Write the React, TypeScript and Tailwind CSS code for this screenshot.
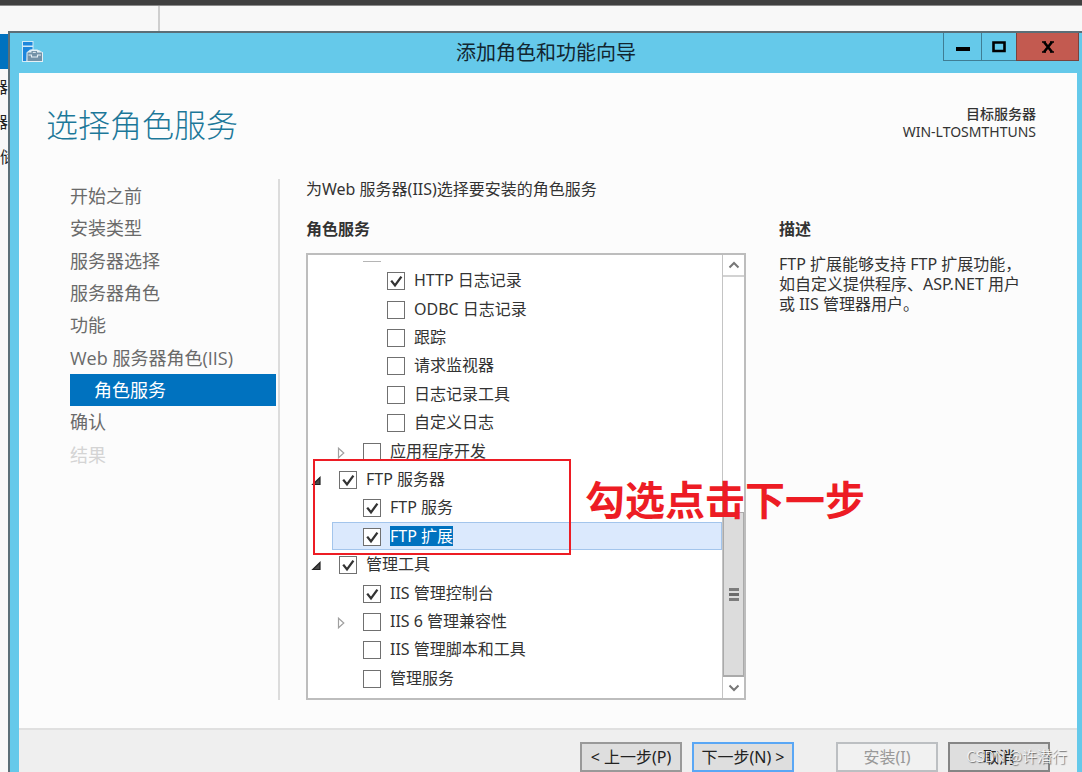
import React from "react";

type Item = {
  label: string;
  level: 0 | 1 | 2;
  checked?: boolean;
  expander?: "open" | "closed";
  selected?: boolean;
};

const items: Item[] = [
  { label: "HTTP 日志记录", level: 2, checked: true },
  { label: "ODBC 日志记录", level: 2 },
  { label: "跟踪", level: 2 },
  { label: "请求监视器", level: 2 },
  { label: "日志记录工具", level: 2 },
  { label: "自定义日志", level: 2 },
  { label: "应用程序开发", level: 1, expander: "closed" },
  { label: "FTP 服务器", level: 0, checked: true, expander: "open" },
  { label: "FTP 服务", level: 1, checked: true },
  { label: "FTP 扩展", level: 1, checked: true, selected: true },
  { label: "管理工具", level: 0, checked: true, expander: "open" },
  { label: "IIS 管理控制台", level: 1, checked: true },
  { label: "IIS 6 管理兼容性", level: 1, expander: "closed" },
  { label: "IIS 管理脚本和工具", level: 1 },
  { label: "管理服务", level: 1 },
];

const indent = ["ml-0", "ml-6", "ml-12"];

const steps = [
  { label: "开始之前" },
  { label: "安装类型" },
  { label: "服务器选择" },
  { label: "服务器角色" },
  { label: "功能" },
  { label: "Web 服务器角色(IIS)" },
  { label: "角色服务", state: "current" },
  { label: "确认" },
  { label: "结果", state: "disabled" },
];

function Expander({ kind }: { kind?: "open" | "closed" }) {
  return (
    <span className="flex w-[30px] shrink-0 items-center pt-1">
      {kind === "open" && (
        <button type="button" aria-label="折叠" className="ml-[2px]">
          <svg width="11" height="10" viewBox="0 0 11 10" className="block">
            <path d="M9 1.5V8.5H1.8Z" fill="#4a4a4a" stroke="#222" strokeWidth="1.2" />
          </svg>
        </button>
      )}
      {kind === "closed" && (
        <button type="button" aria-label="展开" className="ml-1">
          <svg width="9" height="12" viewBox="0 0 9 12" className="block">
            <path d="M1.5 1.2V10.8L6.8 6Z" fill="#fff" stroke="#a0a0a0" strokeWidth="1.2" />
          </svg>
        </button>
      )}
    </span>
  );
}

function TreeRow({ item }: { item: Item }) {
  return (
    <li
      className={`flex min-h-0 flex-1 border ${indent[item.level]} ${
        item.selected ? "border-[#a3c5ec] bg-[#dbe9fd]" : "border-transparent"
      }`}
    >
      <Expander kind={item.expander} />
      <label className="flex items-center">
        <span className="mt-[2px] grid size-[18px] shrink-0">
          <input
            type="checkbox"
            defaultChecked={item.checked}
            className="peer size-[18px] appearance-none border border-[#707070] bg-white [grid-area:1/1]"
          />
          <svg
            viewBox="0 0 18 18"
            className="pointer-events-none invisible size-[18px] [grid-area:1/1] peer-checked:visible"
          >
            <path d="M4.2 8.6L8 13.4L14.4 4.6" fill="none" stroke="#333" strokeWidth="2.3" />
          </svg>
        </span>
        <span
          className={`ml-[9px] text-base leading-5 whitespace-nowrap ${
            item.selected ? "bg-[#0072bf] text-white" : "text-[#333]"
          }`}
        >
          {item.label}
        </span>
      </label>
    </li>
  );
}

function Scrollbar() {
  return (
    <div className="flex w-[22px] shrink-0 flex-col border-l border-[#c4c4c4] bg-white">
      <button type="button" aria-label="向上滚动" className="flex h-[22px] items-center justify-center border-b-2 border-[#d2d2d2]">
        <svg width="12" height="8" viewBox="0 0 12 8">
          <path d="M1.5 6.5L6 2L10.5 6.5" fill="none" stroke="#777" strokeWidth="2" />
        </svg>
      </button>
      <div className="flex flex-1 flex-col justify-end">
        <div className="flex h-[165px] flex-col items-center justify-center gap-[2px] border border-b-2 border-[#aaa] bg-[#dcdcdc]">
          <span className="h-[3px] w-[10px] bg-[#7c7c7c]" />
          <span className="h-[3px] w-[10px] bg-[#6c6c6c]" />
          <span className="h-[3px] w-[10px] bg-[#7c7c7c]" />
        </div>
      </div>
      <button type="button" aria-label="向下滚动" className="flex h-[21px] items-center justify-center">
        <svg width="12" height="8" viewBox="0 0 12 8">
          <path d="M1.5 1.5L6 6L10.5 1.5" fill="none" stroke="#777" strokeWidth="2" />
        </svg>
      </button>
    </div>
  );
}

function WizardIcon() {
  return (
    <svg width="24" height="24" viewBox="0 0 24 24" className="block">
      <path d="M1 1H12.5V10H18L22 12.5V22H1Z" fill="#cfeaf7" />
      <path d="M2 2H11.5V5.5H2Z" fill="#1c86dc" />
      <path d="M2 7H11.5V9.5H9L5.5 12.5V21H2Z" fill="#1c86dc" />
      <path d="M6 12L9 11.5L10.5 9.5H16.5L18 11.5L22 12.5V22H5.5Z" fill="#e6f0f5" />
      <path d="M10.5 12.5V11H16V12.5H21V21H6.5V12.5Z" fill="#7392a8" />
      <path d="M11.8 12.4H14.8" stroke="#e6f0f5" strokeWidth="1" />
      <path d="M7.5 15H10.5V17H16.5V15H20" fill="none" stroke="#e6f0f5" strokeWidth="1.1" />
    </svg>
  );
}

function TitleBar() {
  return (
    <header className="grid h-[40px] grid-cols-[1fr_auto_1fr] text-[#122630]">
      <div className="pt-[7px] pl-[11px]">
        <WizardIcon />
      </div>
      <div className="self-center text-xl leading-6">添加角色和功能向导</div>
      <div className="mr-[3px] flex h-[28px] justify-end">
        <button type="button" aria-label="最小化" className="flex w-[39px] items-center justify-center border border-t-0 border-[#3f7d94]">
          <svg width="14" height="12" viewBox="0 0 14 12">
            <path d="M0 6H14V10H0Z" fill="#000" />
          </svg>
        </button>
        <button type="button" aria-label="最大化" className="flex w-[34px] items-center justify-center border-b border-[#3f7d94]">
          <svg width="14" height="12" viewBox="0 0 14 12">
            <path d="M1.5 1.5H12.5V10H1.5Z" fill="none" stroke="#000" strokeWidth="2.6" />
          </svg>
        </button>
        <button type="button" aria-label="关闭" className="flex w-[63px] items-center justify-center border border-t-0 border-[#7a423d] bg-[#c35a50]">
          <svg width="12" height="12" viewBox="0 0 12 12">
            <path d="M2 1L10 11M10 1L2 11" fill="none" stroke="#000" strokeWidth="2.6" />
            <path d="M0 1H4M8 1H12M0 11H4M8 11H12" stroke="#000" strokeWidth="1.4" />
          </svg>
        </button>
      </div>
    </header>
  );
}

export default function App() {
  const actionButton =
    "h-[30px] w-[102px] border-2 text-base leading-5 whitespace-nowrap text-center";
  return (
    <div className="relative flex min-h-screen flex-col overflow-hidden bg-[#f8f8f8] font-['Noto_Sans','Noto_Sans_CJK_SC',sans-serif] text-[#333]">
      <div className="h-[6px] border-b border-[#8a8a8a] bg-[#404040]" />
      <div className="flex h-[25px]">
        <div className="w-[160px] border-r-2 border-[#cfcfcf]" />
      </div>
      <div className="flex flex-1">
        <div className="w-2 shrink-0 overflow-hidden pt-[3px] text-base text-[#222]">
          <div className="h-[35px] bg-[#0072bf]" />
          <div className="flex h-[35px] items-center justify-end">器</div>
          <div className="flex h-[35px] items-center justify-end">器</div>
          <div className="flex h-[35px] items-center">储</div>
        </div>

        <section className="flex flex-1 flex-col border-t-2 border-l-2 border-[#5b6e77] bg-[#65c9ea]">
          <TitleBar />
          <main className="mr-[5px] ml-[9px] flex flex-1 flex-col bg-[#fcfcfc]">
            <div className="flex h-[106px] justify-between pr-[41px] pl-[27px]">
              <h1 className="pt-8 text-[32px] leading-10 font-light text-[#1c7899]">选择角色服务</h1>
              <div className="pt-8 text-right text-sm leading-[18px]">
                <div className="font-medium">目标服务器</div>
                <div>WIN-LTOSMTHTUNS</div>
              </div>
            </div>

            <div className="flex flex-1 pr-[41px] pb-[28px] pl-[51px]">
              <nav className="w-[210px] shrink-0 border-r-2 border-[#dcdcdc] pt-px pr-[2px] font-['Open_Sans','Noto_Sans_CJK_SC',sans-serif]">
                <ul className="flex h-[291px] flex-col">
                  {steps.map((s) => (
                    <li key={s.label} className="flex flex-1">
                      <a
                        href="#"
                        className={`flex flex-1 items-center text-lg leading-6 whitespace-nowrap ${
                          s.state === "current"
                            ? "bg-[#0072bf] pl-6 text-white"
                            : s.state === "disabled"
                              ? "text-[#d4d4d4]"
                              : "text-[#6a6a6a]"
                        }`}
                      >
                        {s.label}
                      </a>
                    </li>
                  ))}
                </ul>
              </nav>

              <div className="ml-[26px] flex min-w-0 flex-1 flex-col">
                <p className="text-base leading-5">为Web 服务器(IIS)选择要安装的角色服务</p>
                <h2 className="mt-5 text-base leading-5 font-bold">角色服务</h2>
                <div className="relative mt-[14px] flex border-2 border-[#bdbdbd] bg-white">
                  <div className="flex-1 pb-[6px]">
                    <div className="h-[11px] pl-[55px]">
                      <div className="h-[7px] w-[18px] border-b border-[#b5b5b5]" />
                    </div>
                    <ul className="flex h-[426px] flex-col">
                      {items.map((item) => (
                        <TreeRow key={item.label} item={item} />
                      ))}
                    </ul>
                  </div>
                  <Scrollbar />
                  <div className="pointer-events-none absolute top-[204px] left-[5px] h-[96px] w-[258px] border-2 border-[#ed1c24]" />
                  <div className="pointer-events-none absolute top-[221px] left-[277px] text-[40px] leading-[48px] font-bold whitespace-nowrap text-[#ed1c24]">
                    勾选点击下一步
                  </div>
                </div>
              </div>

              <aside className="ml-[33px] w-[257px] shrink-0 pt-10">
                <h2 className="text-base leading-5 font-bold">描述</h2>
                <p className="mt-[15px] text-base leading-5">
                  FTP 扩展能够支持 FTP 扩展功能，
                  <br />
                  如自定义提供程序、ASP.NET 用户
                  <br />
                  或 IIS 管理器用户。
                </p>
              </aside>
            </div>

            <footer className="flex justify-end border-t-2 border-[#e0e0e0] bg-[#efefef] pt-3 pr-[27px] text-[#222]">
              <button type="button" className={`${actionButton} border-[#999] bg-[#dedede]`}>
                &lt; 上一步(P)
              </button>
              <button type="button" className={`${actionButton} ml-[10px] border-[#5aa7f5] bg-[#dedede]`}>
                下一步(N) &gt;
              </button>
              <button type="button" disabled className={`${actionButton} ml-[42px] border-[#bcbfc2] bg-[#f1f1f1] text-[#999]`}>
                安装(I)
              </button>
              <button type="button" className={`${actionButton} ml-[10px] border-[#858585] bg-[#dedede]`}>
                取消
              </button>
            </footer>
          </main>
        </section>
      </div>
      <div className="pointer-events-none absolute right-[15px] bottom-[6px] font-['Noto_Sans_CJK_SC',sans-serif] text-[15px] leading-5 font-light text-[#fafafa] [text-shadow:1px_1px_1px_#555]">
        CSDN @许潜行
      </div>
    </div>
  );
}
